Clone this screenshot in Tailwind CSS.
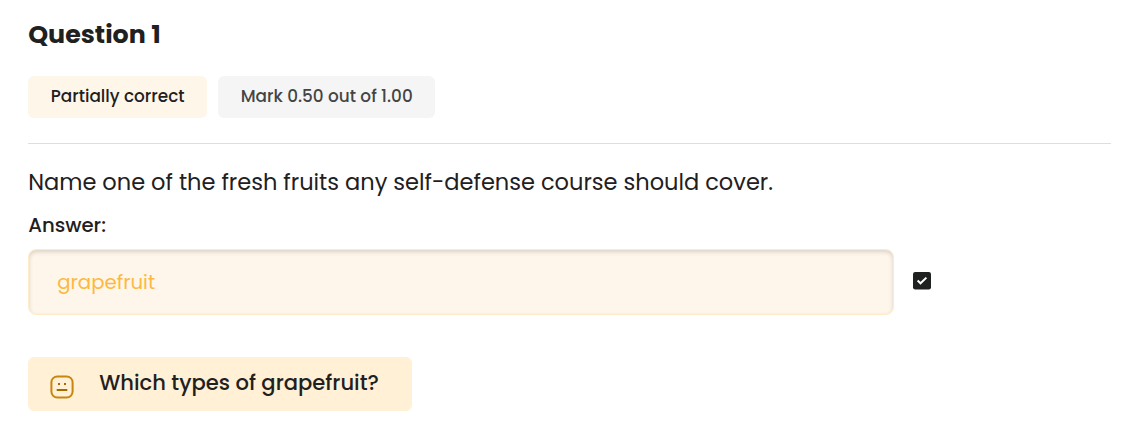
<!DOCTYPE html>
<html lang="en">
<head>
<meta charset="utf-8">
<title>Question 1</title>
<script src="https://cdn.jsdelivr.net/npm/@tailwindcss/browser@4"></script>
</head>
<body class="bg-white font-['Poppins','Inter',sans-serif] text-[#1f2020]">
<main class="flex flex-col items-start pl-[28.2px] pr-7 pt-[18px] whitespace-nowrap">
  <h1 class="h-8 text-[25.31px] leading-8 font-bold"><span>Question 1</span></h1>
  <div class="mt-[26px] flex gap-[11px] text-[16.875px] font-medium">
    <div class="flex h-[42px] w-[179px] items-center justify-center rounded-md bg-[#fff6ea]"><span>Partially correct</span></div>
    <div class="flex h-[42px] w-[217px] items-center justify-center rounded-md bg-[#f5f5f5] text-[#444444]"><span>Mark 0.50 out of 1.00</span></div>
  </div>
  <hr class="mt-[25px] w-full border-t border-[#dedede]">
  <p class="mt-[22px] h-8 text-[22.5px] leading-8"><span>Name one of the fresh fruits any self-defense course should cover.</span></p>
  <label for="answer" class="mt-[13px] h-7 text-[19.69px] leading-7 font-medium">Answer:</label>
  <div class="mt-[10px] flex items-center">
    <div id="answer" class="flex h-[66px] w-[866px] items-center rounded-lg border border-[#ffebc8] bg-[#fef6ea] pl-7 pt-[2px] text-[19.69px] text-[#fcb941] shadow-[inset_0_2px_4px_rgba(0,0,0,0.15)]"><span>grapefruit</span></div>
    <svg class="ml-[19px] mb-[3px] h-[18px] w-[18px]" viewBox="0 0 18 18" fill="none"><rect width="18" height="17.5" rx="2.2" fill="#1f2020"/><path d="M4.6 8.6 7.5 11.3 13.4 5.6" stroke="#fff" stroke-width="2"/></svg>
  </div>
  <div class="mt-[42px] flex h-[54px] w-[384px] items-center rounded-md bg-[#fff0d6] pl-[22px]">
    <svg class="mt-[5px] h-6 w-6" viewBox="0 0 24 24" fill="none" stroke="#c68610" stroke-width="2"><rect x="1.4" y="1.4" width="21.2" height="21.2" rx="6"/><path d="M6.7 15H17.3" stroke="#a66b00"/><path d="M8 9h2M14 9h2" stroke="#a66b00"/></svg>
    <span class="-mt-[2px] ml-[25px] text-[21.09px] font-medium">Which types of grapefruit?</span>
  </div>
</main>
</body>
</html>
